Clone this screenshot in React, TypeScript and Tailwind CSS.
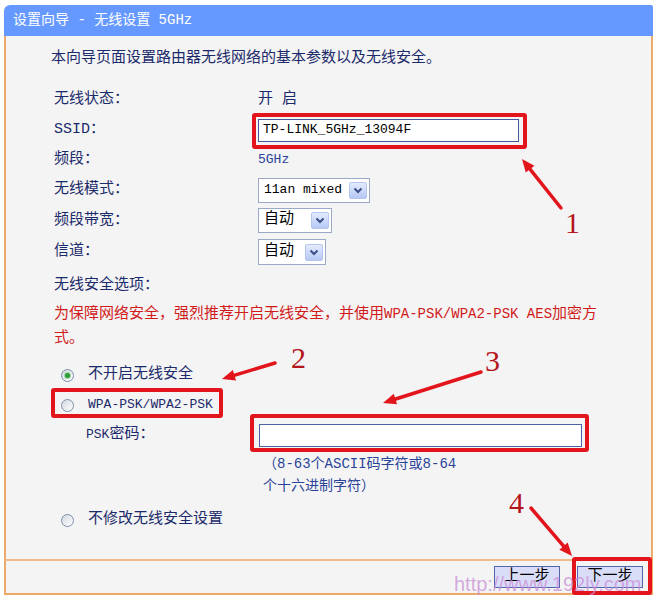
import type { ReactNode } from "react";

// ── small form pieces ─────────────────────────────────────────────────────────

function FakeSelect({ className, children }: { className: string; children: ReactNode }) {
  return (
    <div
      className={`flex items-center justify-between border border-[#9aa9c6] bg-white pl-[5px] pr-[2px] ${className}`}
    >
      <span className="whitespace-nowrap text-black">{children}</span>
      <span className="flex h-[17px] w-[18px] items-center justify-center rounded-[2px] border border-[#b4c6ef] bg-linear-to-b from-[#e4ebfd] to-[#b5c9f4]">
        <svg width="10" height="7" viewBox="0 0 10 7">
          <path d="M1.5 1.5 L5 5 L8.5 1.5" fill="none" stroke="#3b4f86" strokeWidth="2" />
        </svg>
      </span>
    </div>
  );
}

function Radio({ checked }: { checked?: boolean }) {
  return (
    <span className="flex h-[13px] w-[13px] shrink-0 items-center justify-center rounded-full border border-[#7d8ea8] bg-linear-to-br from-[#d3d8e1] to-white">
      {checked && <span className="h-[5px] w-[5px] rounded-full bg-[#2f9c38] ring-1 ring-[#9fd8a4]" />}
    </span>
  );
}

function Row({ h, label, children }: { h: string; label: ReactNode; children: ReactNode }) {
  return (
    <div className={`flex items-center ${h}`}>
      <div className="w-[204px] text-[15px] leading-[20px] text-[#1b2a6b]">{label}</div>
      {children}
    </div>
  );
}

// ── annotation layer (red marks drawn over the screenshot) ────────────────────

const arrows = [
  { x1: 561, y1: 208, x2: 522, y2: 159 },
  { x1: 275, y1: 363, x2: 222, y2: 379 },
  { x1: 481, y1: 372, x2: 383, y2: 403 },
  { x1: 531, y1: 508, x2: 572, y2: 556 },
];

function arrowHead(a: { x1: number; y1: number; x2: number; y2: number }) {
  const dx = a.x2 - a.x1;
  const dy = a.y2 - a.y1;
  const len = Math.hypot(dx, dy);
  const ux = dx / len;
  const uy = dy / len;
  const bx = a.x2 - ux * 13;
  const by = a.y2 - uy * 13;
  const px = -uy * 5.5;
  const py = ux * 5.5;
  return `${a.x2},${a.y2} ${bx + px},${by + py} ${bx - px},${by - py}`;
}

function Annotations() {
  return (
    <div className="pointer-events-none absolute inset-0">
      <div className="absolute left-[252px] top-[113px] h-[36px] w-[275px] rounded-[3px] border-4 border-[#e3151c]" />
      <div className="absolute left-[51px] top-[388px] h-[30px] w-[172px] rounded-[3px] border-4 border-[#e3151c]" />
      <div className="absolute left-[250px] top-[414px] h-[38px] w-[339px] rounded-[3px] border-4 border-[#e3151c]" />
      <div className="absolute left-[572px] top-[557px] h-[38px] w-[80px] rounded-[3px] border-4 border-[#e3151c]" />

      <svg className="absolute inset-0" width="658" height="600" viewBox="0 0 658 600">
        {arrows.map((a) => {
          const len = Math.hypot(a.x2 - a.x1, a.y2 - a.y1);
          const ex = a.x2 - ((a.x2 - a.x1) / len) * 10;
          const ey = a.y2 - ((a.y2 - a.y1) / len) * 10;
          return (
            <g key={a.x1}>
              <line x1={a.x1} y1={a.y1} x2={ex} y2={ey} stroke="#e3151c" strokeWidth="3.5" strokeLinecap="round" />
              <polygon points={arrowHead(a)} fill="#e3151c" />
            </g>
          );
        })}
      </svg>

      <span className="absolute left-[565px] top-[208px] font-['Liberation_Serif',serif] text-[30px] leading-[30px] text-[#b4141c]">1</span>
      <span className="absolute left-[291px] top-[343px] font-['Liberation_Serif',serif] text-[30px] leading-[30px] text-[#b4141c]">2</span>
      <span className="absolute left-[485px] top-[346px] font-['Liberation_Serif',serif] text-[30px] leading-[30px] text-[#b4141c]">3</span>
      <span className="absolute left-[509px] top-[488px] font-['Liberation_Serif',serif] text-[30px] leading-[30px] text-[#b4141c]">4</span>

      <span className="absolute left-[454px] top-[574px] font-['Liberation_Sans',sans-serif] text-[20px] leading-[20px] text-[#c98fd6]/75">
        http://www.192ly.com
      </span>
    </div>
  );
}

// ── page ──────────────────────────────────────────────────────────────────────

export default function App() {
  return (
    <div className="relative h-[600px] w-[658px] overflow-hidden bg-white pl-[4px] pt-[5px] font-['Liberation_Mono','Noto_Sans_CJK_SC',monospace]">
      <div className="w-[649px]">
        {/* Title */}
        <div className="h-[31px] rounded-tl-[6px] rounded-tr-[2px] bg-[#6699ff] pl-[9px] text-[14px] leading-[31px] text-white">
          设置向导 - 无线设置 5GHz
        </div>

        {/* Body */}
        <div className="h-[525px] border-x-2 border-b-2 border-x-[#eba96a] border-b-[#f0bd88] bg-[#f4f4f4] pt-[13px]">
          <div className="h-[20px] pl-[45px] text-[15px] leading-[20px] text-[#1b2a6b]">
            本向导页面设置路由器无线网络的基本参数以及无线安全。
          </div>

          <div className="mt-[16px] flex flex-col pl-[48px]">
            <Row h="h-[30px]" label="无线状态：">
              <span className="text-[15px] leading-[20px] text-[#1b2a6b]">开 启</span>
            </Row>
            <Row h="h-[30px]" label="SSID：">
              <div className="flex h-[23px] w-[261px] items-center border border-[#45589a] bg-white pl-[4px] text-[13px] text-black">
                TP-LINK_5GHz_13094F
              </div>
            </Row>
            <Row h="h-[30px]" label="频段：">
              <span className="text-[13px] leading-[20px] text-[#2a4399]">5GHz</span>
            </Row>
            <Row h="h-[30px]" label="无线模式：">
              <FakeSelect className="h-[25px] w-[112px] text-[13px]">11an mixed</FakeSelect>
            </Row>
            <Row h="h-[31px]" label="频段带宽：">
              <FakeSelect className="h-[25px] w-[74px] text-[15px]">自动</FakeSelect>
            </Row>
            <Row h="h-[32px]" label="信道：">
              <FakeSelect className="h-[26px] w-[68px] text-[15px]">自动</FakeSelect>
            </Row>

            <div className="mt-[8px] h-[20px] text-[15px] leading-[20px] text-[#1b2a6b]">无线安全选项：</div>

            <div className="mt-[6px] whitespace-nowrap text-[15px] leading-[24px] text-[#d11a1a]">
              为保障网络安全，强烈推荐开启无线安全，并使用
              <span className="text-[14px]">WPA-PSK/WPA2-PSK AES</span>加密方
              <br />
              式。
            </div>
          </div>

          {/* Security options */}
          <div className="flex flex-col pl-[55px]">
            <div className="mt-[12px] flex h-[24px] items-center gap-[14px]">
              <Radio checked />
              <span className="text-[15px] leading-[20px] text-[#1b2a6b]">不开启无线安全</span>
            </div>
            <div className="mt-[6px] flex h-[24px] items-center gap-[14px]">
              <Radio />
              <span className="text-[13px] leading-[20px] text-[#1b2a6b]">WPA-PSK/WPA2-PSK</span>
            </div>
            <div className="mt-[6px] flex h-[24px] items-center pl-[25px]">
              <span className="w-[173px] text-[15px] leading-[20px] text-[#1b2a6b]">
                <span className="text-[13px]">PSK</span>密码：
              </span>
              <div className="h-[23px] w-[323px] border border-[#4e63a5] bg-white" />
            </div>
            <div className="mt-[6px] pl-[202px] text-[14px] leading-[22px] text-[#2a4399]">
              <div>（8-63个ASCII码字符或8-64</div>
              <div>个十六进制字符）</div>
            </div>
            <div className="mt-[11px] flex h-[24px] items-center gap-[14px]">
              <Radio />
              <span className="text-[15px] leading-[20px] text-[#1b2a6b]">不修改无线安全设置</span>
            </div>
          </div>
        </div>

        {/* Footer */}
        <div className="flex h-[34px] items-center justify-end gap-[17px] border-x-2 border-b-2 border-[#eba96a] bg-[#f4f4f4] pr-[8px]">
          <button className="h-[22px] w-[66px] border border-[#5164ac] bg-[#d9ddf8] text-[15px] leading-[20px] text-black">
            上一步
          </button>
          <button className="h-[22px] w-[66px] border border-[#5164ac] bg-[#d9ddf8] text-[15px] leading-[20px] text-black">
            下一步
          </button>
        </div>
      </div>

      <Annotations />
    </div>
  );
}
